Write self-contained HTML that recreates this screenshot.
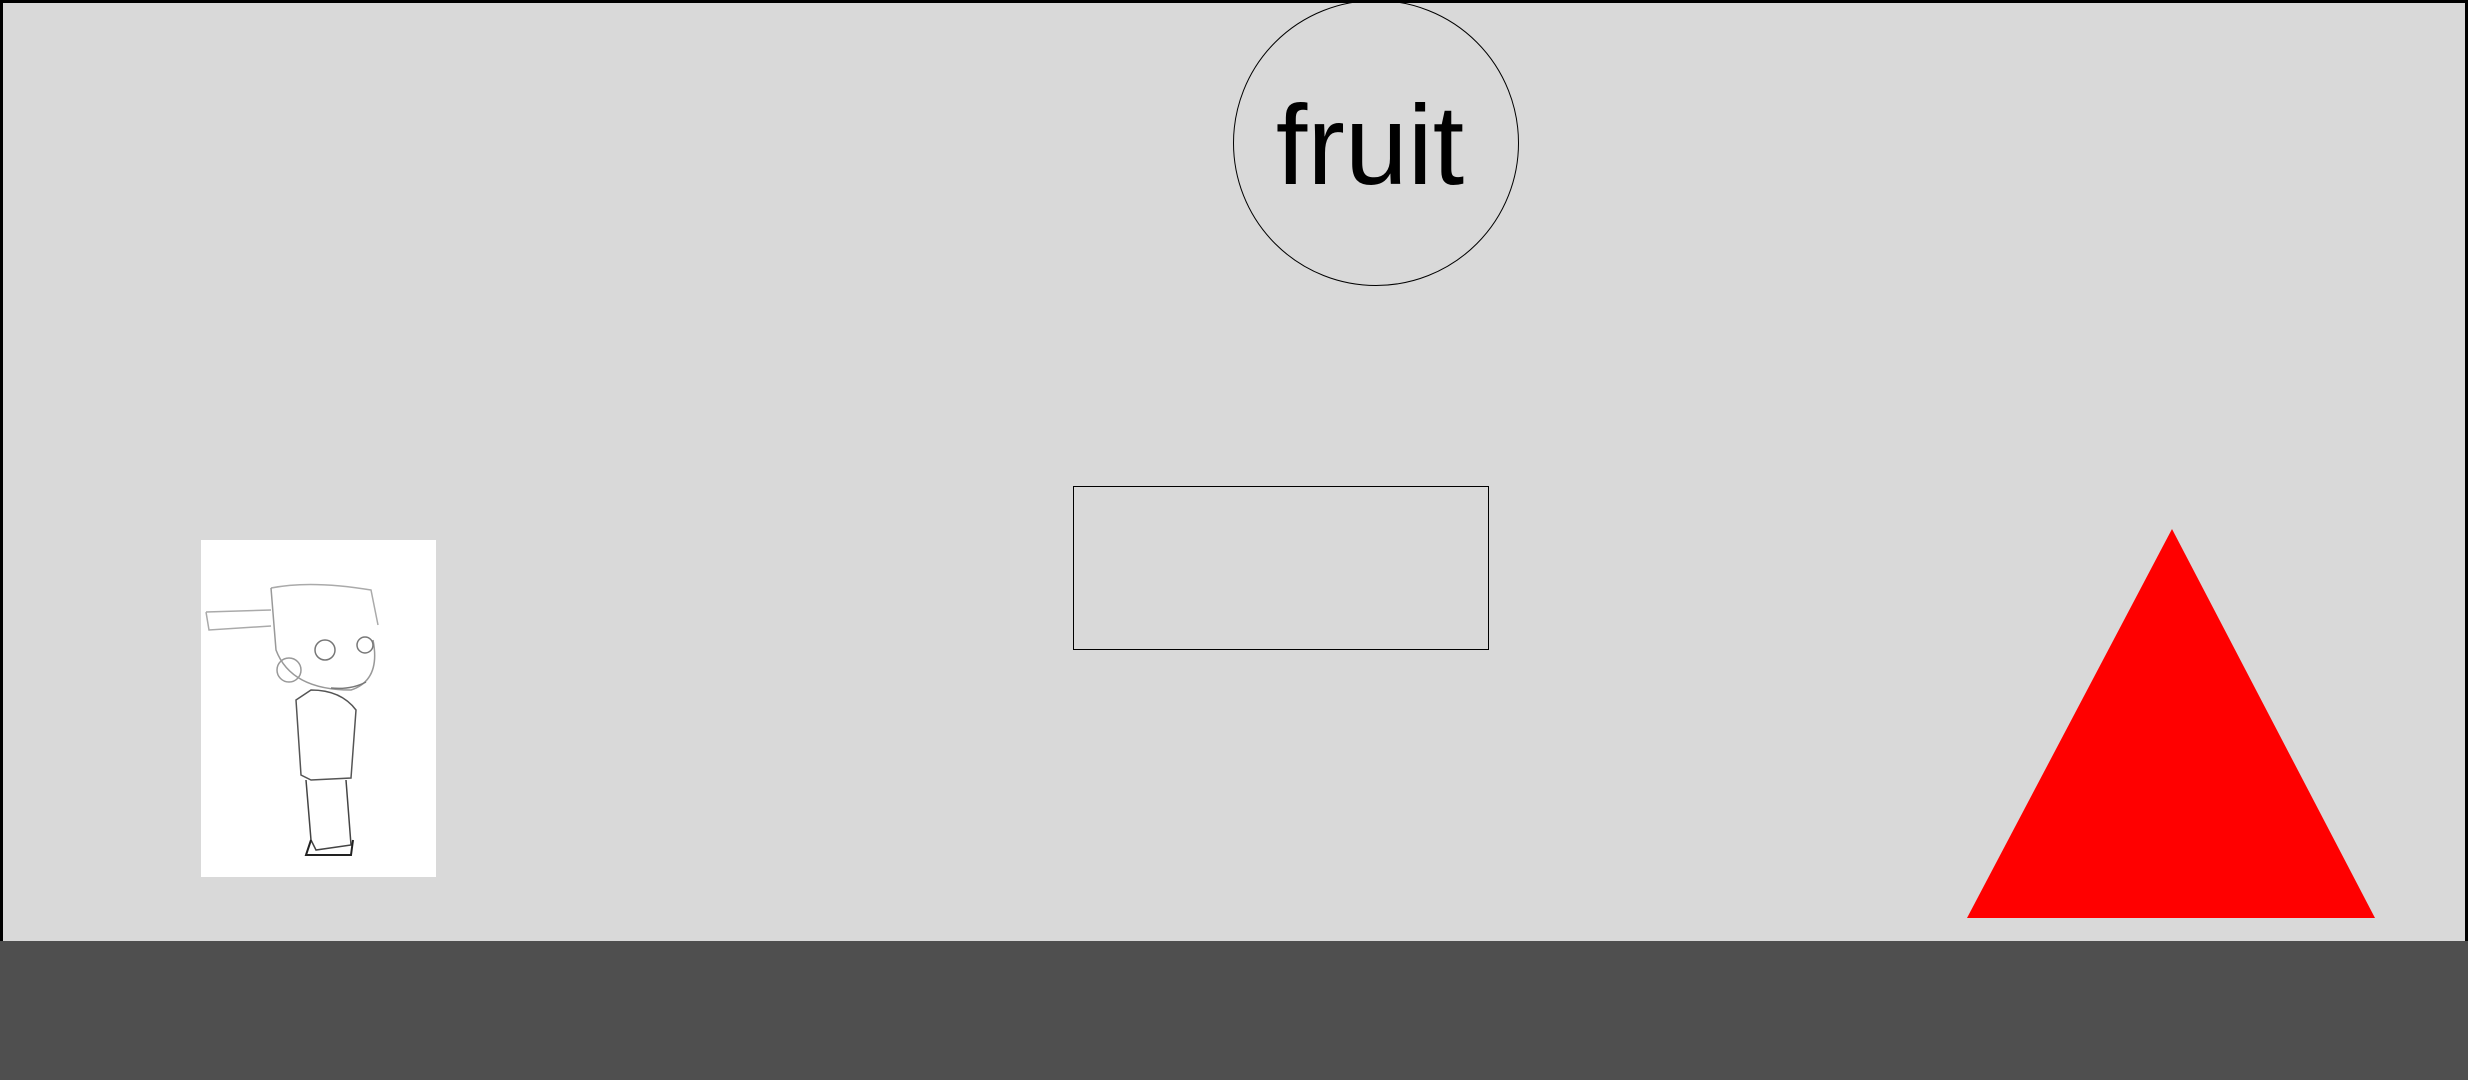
<!DOCTYPE html>
<html><head><style>
html,body{margin:0;padding:0;width:2468px;height:1080px;overflow:hidden;background:#4f4f4f;}
#stage{position:absolute;left:0;top:0;width:2462px;height:938px;background:#d9d9d9;border:3px solid #000;border-bottom:none;}
.abs{position:absolute;}
</style></head><body>
<div id="stage"></div>
<div class="abs" style="left:1233px;top:0px;width:286px;height:286px;border:1.5px solid #000;border-radius:50%;box-sizing:border-box;"></div>
<div class="abs" style="left:1227px;top:89px;width:286px;text-align:center;font-family:'Liberation Sans',sans-serif;font-size:113px;line-height:112px;color:#000;">fruit</div>
<div class="abs" style="left:1073px;top:486px;width:416px;height:164px;border:1.5px solid #000;box-sizing:border-box;"></div>
<div class="abs" style="left:201px;top:540px;width:235px;height:337px;background:#fff;">
<svg width="235" height="337" viewBox="0 0 235 337" fill="none" stroke="#777" stroke-width="1.5">
<path d="M5 72 L70 70 M5 72 L8 90 L70 86" stroke="#aaa"/>
<path d="M70 48 Q110 40 170 50 L177 85" stroke="#aaa"/>
<path d="M70 48 L75 110 Q90 150 150 150 Q180 140 172 100" stroke="#999"/>
<circle cx="124" cy="110" r="10"/><circle cx="164" cy="105" r="8"/>
<path d="M130 148 Q150 150 165 142" />
<circle cx="88" cy="130" r="12" stroke="#999"/>
<path d="M95 160 L100 235 L110 240 L150 238 L155 170 Q140 150 110 150 Z" stroke="#555"/>
<path d="M105 240 L110 300 L115 310 L150 305 L145 240" stroke="#444"/>
<path d="M110 300 L105 315 L150 315 L152 300" stroke="#222" stroke-width="2"/>
</svg></div>
<svg class="abs" style="left:0;top:0" width="2468" height="1080"><polygon points="2172,529 1967,918 2375,918" fill="#ff0000"/></svg>
</body></html>
